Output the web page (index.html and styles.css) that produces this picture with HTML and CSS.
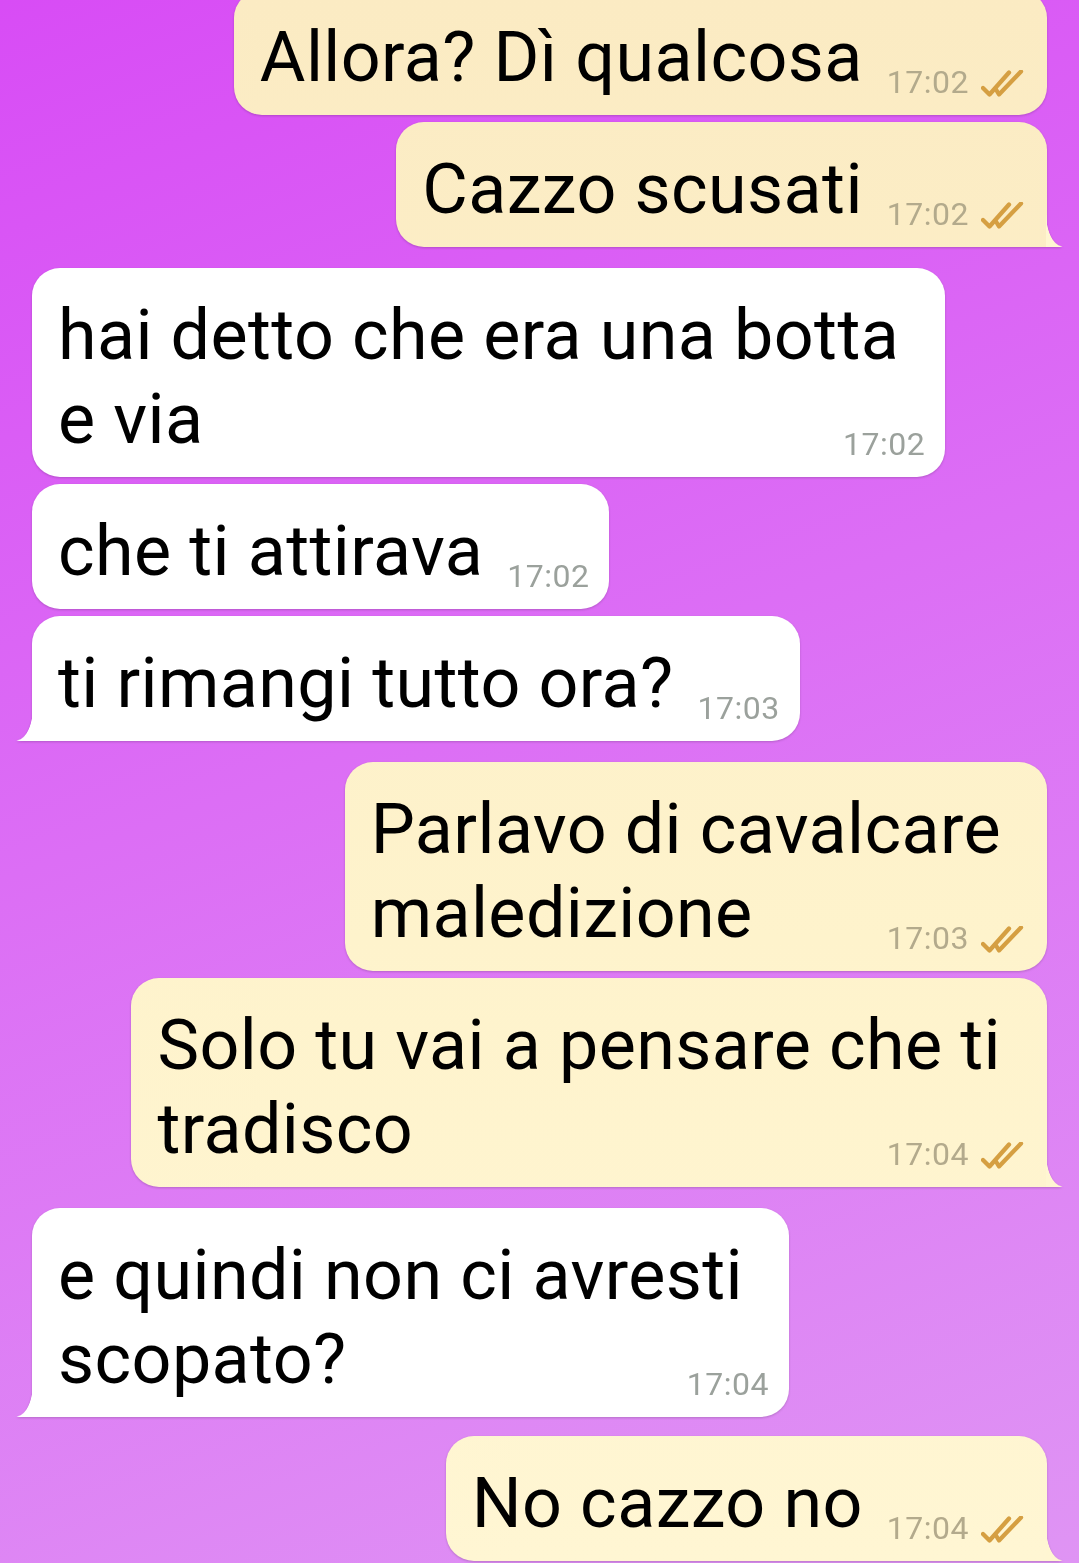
FILE: index.html
```html
<!DOCTYPE html>
<html lang="it">

<head>
  <meta charset="UTF-8" />
  <meta name="viewport" content="width=device-width, initial-scale=1.0" />
  <title>Chat</title>
  <link rel="stylesheet" href="styles.css">
</head>

<body>
  <section class="chat">
    <div class="msg out">
      Allora? Dì qualcosa<span class="meta">17:02<svg class="ticks" viewBox="0 0 46 27"><path d="M2 18 L8.5 24.5 L28 2.5 M15 19.5 L18 24.5 L40 1.5" /></svg></span>
    </div>
    <div class="msg out tail">
      Cazzo scusati<span class="meta">17:02<svg class="ticks" viewBox="0 0 46 27"><path d="M2 18 L8.5 24.5 L28 2.5 M15 19.5 L18 24.5 L40 1.5" /></svg></span>
    </div>

    <div class="msg in first multi">
      hai detto che era una botta<br>e via<span class="meta">17:02</span>
    </div>
    <div class="msg in">
      che ti attirava<span class="meta">17:02</span>
    </div>
    <div class="msg in tail">
      ti rimangi tutto ora?<span class="meta">17:03</span>
    </div>

    <div class="msg out first multi">
      Parlavo di cavalcare<br>maledizione<span class="meta">17:03<svg class="ticks" viewBox="0 0 46 27"><path d="M2 18 L8.5 24.5 L28 2.5 M15 19.5 L18 24.5 L40 1.5" /></svg></span>
    </div>
    <div class="msg out tail multi">
      Solo tu vai a pensare che ti<br>tradisco<span class="meta">17:04<svg class="ticks" viewBox="0 0 46 27"><path d="M2 18 L8.5 24.5 L28 2.5 M15 19.5 L18 24.5 L40 1.5" /></svg></span>
    </div>

    <div class="msg in first tail multi">
      e quindi non ci avresti<br>scopato?<span class="meta">17:04</span>
    </div>

    <div class="msg out first tail last">
      No cazzo no<span class="meta">17:04<svg class="ticks" viewBox="0 0 46 27"><path d="M2 18 L8.5 24.5 L28 2.5 M15 19.5 L18 24.5 L40 1.5" /></svg></span>
    </div>
  </section>
</body>

</html>
```

FILE: styles.css
```css
:root {
  --bg: linear-gradient(160deg, #d84cf5 0%, #dc6ef5 45%, #df94f4 100%);
  --sent: linear-gradient(180deg, #fbebc3 0%, #fef3cc 60%, #fff6d3 100%);
  --sent-bottom: #fff6d2;
  --white: #ffffff;
  --black: #000000;
  --time-sent: #b3aa8c;
  --time-in: #9ba19c;
  --tick: #d59f42;
}

html,
body {
  height: 100%;
}

body {
  margin: 0;
  overflow: hidden;
  background: var(--bg);
  font-family: Roboto, "Noto Sans", sans-serif;
}

.chat {
  display: flex;
  flex-direction: column;
  padding: 0 32px;
  margin-top: -10px;
}

.msg {
  position: relative;
  padding: 25px 20px 13px 26px;
  border-radius: 28px;
  font-size: 70px;
  letter-spacing: 0.4px;
  line-height: 84px;
  color: var(--black);
  margin-top: 7px;
  filter: drop-shadow(0 1px 1px rgba(0, 0, 0, 0.18));
}

.msg:first-child {
  margin-top: 0;
}

.msg.first {
  margin-top: 21px;
}

.msg.last {
  margin-top: 19px;
}

.msg.multi {
  padding-right: 46px;
}

.msg.multi .meta {
  margin-right: -26px;
}

.out {
  align-self: flex-end;
  background: var(--sent);
  background-attachment: fixed;
}

.in {
  align-self: flex-start;
  background: var(--white);
}

.meta {
  float: right;
  display: flex;
  align-items: center;
  margin-top: 47px;
  margin-left: 24px;
  font-size: 32px;
  letter-spacing: 0.5px;
  line-height: 40px;
  color: var(--time-in);
}

.out .meta {
  color: var(--time-sent);
}

.ticks {
  width: 46px;
  height: 27px;
  margin-left: 12px;
  margin-top: 2px;
  fill: none;
  stroke: var(--tick);
  stroke-width: 4.3;
  stroke-linecap: round;
  stroke-linejoin: round;
}

/* little tail on the last bubble of a group */
.out.tail {
  border-bottom-right-radius: 0;
}

.in.tail {
  border-bottom-left-radius: 0;
}

.tail::after {
  content: "";
  position: absolute;
  bottom: 0;
  width: 17px;
  height: 32px;
}

.out.tail::after {
  right: -16px;
  background: radial-gradient(ellipse 17px 32px at 100% 0, transparent 96%, var(--sent-bottom) 100%);
  border-bottom-right-radius: 3px;
}

.in.tail::after {
  left: -16px;
  background: radial-gradient(ellipse 17px 32px at 0 0, transparent 96%, var(--white) 100%);
  border-bottom-left-radius: 3px;
}
```
